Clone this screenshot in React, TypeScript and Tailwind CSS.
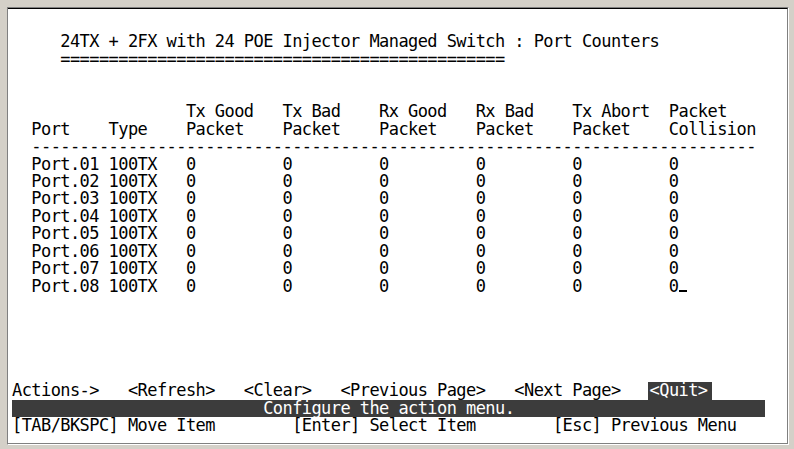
import React from "react";

const place = (items: [number, string][], len = 80): string => {
  const arr = Array(len).fill(" ");
  for (const [col, text] of items) {
    for (let i = 0; i < text.length; i++) arr[col + i] = text[i];
  }
  return arr.join("").replace(/\s+$/, "");
};

const cols = [18, 28, 38, 48, 58, 68];

function Row({ children }: { children?: React.ReactNode }) {
  return <div className="h-[17.45px] whitespace-pre leading-[17.45px]">{children}</div>;
}

export default function App() {
  const rows: string[] = [];
  rows.push("");
  rows.push(place([[5, "24TX + 2FX with 24 POE Injector Managed Switch : Port Counters"]]));
  rows.push(place([[5, "=".repeat(46)]]));
  rows.push("");
  rows.push("");
  rows.push(
    place([
      [18, "Tx Good"],
      [28, "Tx Bad"],
      [38, "Rx Good"],
      [48, "Rx Bad"],
      [58, "Tx Abort"],
      [68, "Packet"],
    ])
  );
  rows.push(
    place([
      [2, "Port"],
      [10, "Type"],
      [18, "Packet"],
      [28, "Packet"],
      [38, "Packet"],
      [48, "Packet"],
      [58, "Packet"],
      [68, "Collision"],
    ])
  );
  rows.push(place([[2, "-".repeat(75)]]));

  const ports = ["01", "02", "03", "04", "05", "06", "07", "08"];

  return (
    <div className="w-[794px] h-[449px] bg-[#d4d0c8] pt-[7px] pl-[7px] overflow-hidden">
      <div className="w-[782px] h-[438px] border-t border-l border-[#808080] border-r border-b border-r-white border-b-white flex">
        <div className="flex-1 bg-white border-t border-t-black border-r border-b border-r-[#808080] border-b-[#808080] pl-[4px] pt-[7px] text-black text-[17px] tracking-[-0.575px] font-['DejaVu_Sans_Mono',monospace]">
          {rows.map((r, i) => (
            <Row key={i}>{r}</Row>
          ))}
          {ports.map((p, i) => {
            const line = place([
              [2, "Port." + p],
              [10, "100TX"],
              ...cols.map((c) => [c, "0"] as [number, string]),
            ]);
            return (
              <Row key={p}>
                {line}
                {i === ports.length - 1 && (
                  <span className="inline-block w-[8px] h-[2px] bg-black align-baseline" />
                )}
              </Row>
            );
          })}
          <Row />
          <Row />
          <Row />
          <Row />
          <Row />
          <Row>
            {place([
              [0, "Actions->"],
              [12, "<Refresh>"],
              [24, "<Clear>"],
              [34, "<Previous Page>"],
              [52, "<Next Page>"],
            ])}
            {"   "}
            <span className="inline-block h-[17.45px] ml-[-2px] pl-[2px] pr-[4px] bg-[#3c3c3c] text-white">{"<Quit>"}</span>
          </Row>
          <div className="h-[17.45px] w-[753px] whitespace-pre leading-[17.45px] bg-[#3c3c3c] text-white">
            {place([[26, "Configure the action menu."]])}
          </div>
          <Row>
            {place([
              [0, "[TAB/BKSPC] Move Item"],
              [29, "[Enter] Select Item"],
              [56, "[Esc] Previous Menu"],
            ])}
          </Row>
        </div>
      </div>
    </div>
  );
}
